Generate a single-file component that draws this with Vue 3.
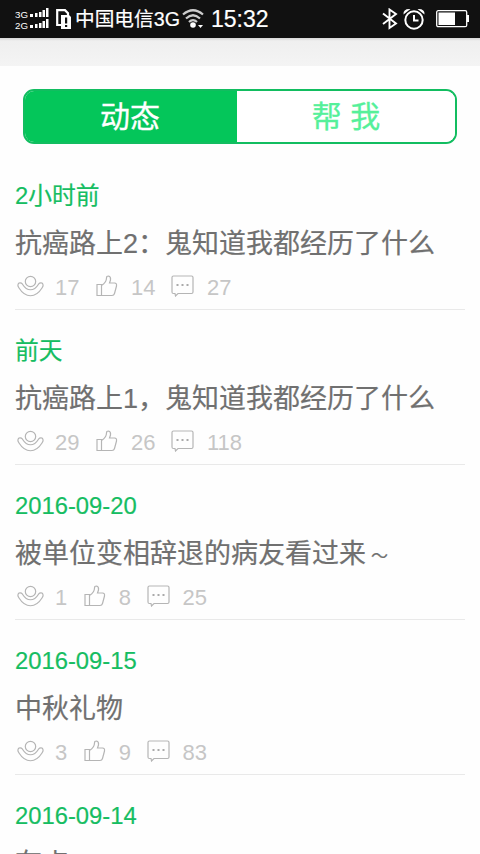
<script setup>
const posts = [
  { date: '2小时前', title: '抗癌路上2：鬼知道我都经历了什么', views: 17, likes: 14, comments: 27 },
  { date: '前天', title: '抗癌路上1，鬼知道我都经历了什么', views: 29, likes: 26, comments: 118 },
  { date: '2016-09-20', title: '被单位变相辞退的病友看过来', tail: '～', views: 1, likes: 8, comments: 25 },
  { date: '2016-09-15', title: '中秋礼物', views: 3, likes: 9, comments: 83 },
  { date: '2016-09-14', title: '有点', views: 2, likes: 5, comments: 16 },
]
</script>

<template>
  <div class="screen">
    <header class="status">
      <svg class="signal" width="34" height="22" viewBox="0 0 34 22">
        <g fill="#fff">
          <text x="0" y="9.500">3G</text>
          <text x="0" y="20.500">2G</text>
          <path d="M15 6h3v3h-3zM20 5h2.500v4H20zM24 4h2.500v5H24zM27.500 2h2.500v7h-2.500zM31 0h2.500v9H31zM15 17h3v3h-3zM20 16h2.500v4H20zM24 15h2.500v5H24zM27.500 13h2.500v7h-2.500zM31 11h2.500v9H31z" />
        </g>
      </svg>
      <svg class="sim" width="16" height="20" viewBox="0 0 16 20">
        <path d="M1.200 1.200H9L12 4.200V16H1.200Z" fill="none" stroke="#fff" stroke-width="2.200" />
        <path d="M5 6h8l2 2v12H5z" fill="#fff" />
        <path d="M9 8.500h2.200v6H9zM9 16h2.200v2H9z" fill="#111" />
      </svg>
      <span class="carrier">中国电信3G</span>
      <svg class="wifi" width="22" height="20" viewBox="0 0 22 20">
        <g fill="none" stroke="#ccc" stroke-width="2.200">
          <path d="M1 5.500Q11-3 21 5.500" />
          <path d="M4 9.500Q11 3 18 9.500" />
          <path d="M7 13Q11 9 15 13" />
        </g>
        <circle cx="11" cy="16" r="2.800" fill="#fff" />
        <path d="M16 16h5l-2.500 3z" fill="#fff" />
      </svg>
      <span class="time">15:32</span>
      <svg class="bluetooth" width="16" height="22" viewBox="0 0 16 22">
        <path d="M1 5.500 14 15.500 7.500 20V1.500L14 6 1 16" fill="none" stroke="#fff" stroke-width="1.900" />
      </svg>
      <svg class="alarm" width="22" height="22" viewBox="0 0 22 22">
        <g fill="none" stroke="#fff" stroke-width="2">
          <circle cx="11" cy="12" r="8.700" />
          <path d="M11 7v5.500h4.500" />
        </g>
        <path d="M.5 6.500Q0 .5 7.500 1ZM21.500 6.500Q22 .5 14.500 1Z" fill="#fff" />
      </svg>
      <svg class="battery" width="33" height="18" viewBox="0 0 33 18">
        <rect x=".7" y=".7" width="30" height="16" rx="1.500" fill="none" stroke="#fff" stroke-width="1.300" />
        <path d="M2.500 2.500H19v12.500H2.500zM31 5h2v7h-2z" fill="#fff" />
      </svg>
    </header>
    <div class="strip"></div>
    <nav class="tabs">
      <button class="tab active">动态</button>
      <button class="tab">帮 我</button>
    </nav>
    <main>
      <article v-for="post in posts" :key="post.date" class="post">
        <time class="date">{{ post.date }}</time>
        <h2 class="title">{{ post.title }}<span v-if="post.tail" class="tail">{{ post.tail }}</span></h2>
        <div class="stats">
          <svg class="view-icon" width="28" height="22" viewBox="0 0 28 22">
            <circle cx="13.500" cy="6.500" r="5.200" />
            <path d="M1 9.500C1.500 7.600 4 7.400 5.500 9.200C10 16.600 17 16.600 21.500 9.200C23 7.400 25.500 7.600 26 9.500C26.400 10.700 25.800 11.800 25 13C18.500 23.300 8.500 23.300 2 13C1.200 11.800.6 10.700 1 9.500Z" />
          </svg>
          <span class="count">{{ post.views }}</span>
          <svg class="like-icon" width="22" height="22" viewBox="0 0 22 22">
            <path d="M1 9.500h4.500v11H1zM5.500 10.500Q10.500 7.500 10.500 3Q10.500 1 12.500 1Q15 1.500 14.500 5L13.500 8H18.500Q21 8 20.500 11L18.500 18.500Q18 20.500 16 20.500H5.500" />
          </svg>
          <span class="count">{{ post.likes }}</span>
          <svg class="comment-icon" width="23" height="22" viewBox="0 0 23 22">
            <path d="M2.500 1H20.500Q22 1 22 2.500V17Q22 18.500 20.500 18.500H7L4.500 21 4 18.500H2.500Q1 18.500 1 17V2.500Q1 1 2.500 1Z" />
            <path class="dots" d="M5.500 9h2v2h-2zM10.500 9h2v2h-2zM15.500 9h2v2h-2z" />
          </svg>
          <span class="count">{{ post.comments }}</span>
        </div>
      </article>
    </main>
  </div>
</template>

<style>
body {
  margin: 0;
  overflow: hidden;
}
</style>

<style scoped>
.screen {
  width: 480px;
  height: 854px;
  overflow: hidden;
  background: #fefefe;
  font-family: "Liberation Sans", "Noto Sans CJK SC", sans-serif;
}
.status {
  box-sizing: border-box;
  display: flex;
  align-items: center;
  height: 38px;
  padding: 0 11px 0 15px;
  background: #111;
  color: #fff;
}
.status svg {
  flex: none;
}
.signal text {
  font-size: 9.700px;
}
.sim {
  margin-left: 7px;
}
.carrier {
  margin-left: 3px;
  font-size: 19.700px;
  line-height: 40px;
  white-space: nowrap;
  -webkit-text-stroke: 0.200px;
}
.wifi {
  margin-left: 2px;
}
.time {
  margin-left: 7px;
  font-size: 23px;
  line-height: 38px;
  -webkit-text-stroke: 0.200px;
}
.bluetooth {
  margin-left: auto;
}
.alarm {
  margin-left: 5px;
}
.battery {
  margin-left: 11px;
}
.strip {
  height: 28px;
  background: linear-gradient(#d8d8d8, #efefef 3px, #f4f4f4);
}
.tabs {
  box-sizing: border-box;
  display: flex;
  width: 434px;
  height: 55px;
  margin: 23px 0 11px 23px;
  overflow: hidden;
  border: 2px solid #12bd60;
  border-radius: 11px;
}
.tab {
  flex: 1;
  padding: 0;
  border: 0;
  background: #fff;
  color: #55f09a;
  font: 30px/51px "Liberation Sans", "Noto Sans CJK SC", sans-serif;
  -webkit-text-stroke: 0.300px;
}
.tab.active {
  flex: 0 0 212px;
  padding-right: 2px;
  background: #04c65a;
  color: #fff;
}
.post {
  box-sizing: border-box;
  height: 155px;
  margin: 0 15px;
  padding-top: 19px;
  border-bottom: 1px solid #e9e9e9;
}
.date {
  display: block;
  height: 47px;
  color: #16bd62;
  font-size: 23.800px;
  line-height: 44px;
  -webkit-text-stroke: 0.200px;
}
.title {
  height: 46px;
  margin: 0;
  color: #707070;
  font-size: 27px;
  font-weight: 400;
  line-height: 46px;
  white-space: nowrap;
  -webkit-text-stroke: 0.200px;
}
.tail {
  padding-left: 5px;
  font-size: 17px;
  vertical-align: 1px;
  line-height: 1;
}
.stats {
  display: flex;
  align-items: center;
  height: 24px;
  padding: 7px 0 0 2px;
}
.stats svg {
  flex: none;
  fill: none;
  stroke: #b5b5b5;
  stroke-width: 1.200;
}
.stats .dots {
  fill: #aaa;
  stroke: none;
}
.count {
  padding-top: 3px;
  color: #c6c6c6;
  font-size: 22px;
  line-height: 24px;
}
.view-icon + .count {
  margin-left: 10px;
}
.like-icon {
  margin-left: 17px;
}
.like-icon + .count {
  margin-left: 12.500px;
}
.comment-icon {
  margin-left: 16px;
}
.comment-icon + .count {
  margin-left: 12.500px;
}
</style>
